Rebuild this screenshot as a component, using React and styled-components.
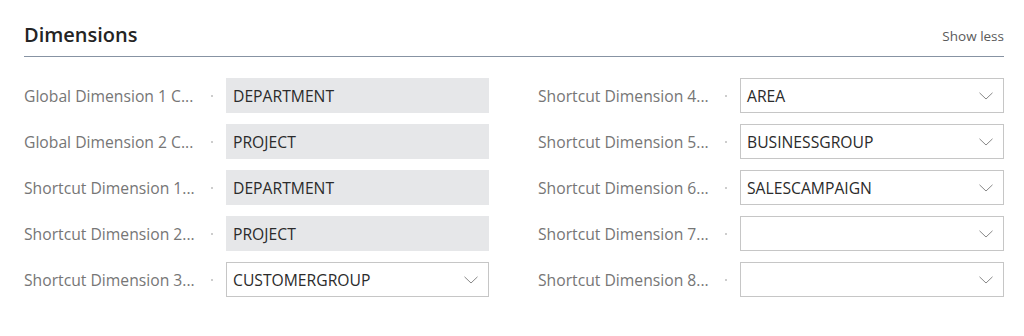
import styled, { createGlobalStyle } from "styled-components";

const GlobalStyle = createGlobalStyle`
  html, body {
    margin: 0;
    padding: 0;
    background: #ffffff;
  }
  body {
    font-family: "Open Sans", "Noto Sans", sans-serif;
  }
`;

const leftFields = [
  { label: "Global Dimension 1 C...", value: "DEPARTMENT", readOnly: true },
  { label: "Global Dimension 2 C...", value: "PROJECT", readOnly: true },
  { label: "Shortcut Dimension 1...", value: "DEPARTMENT", readOnly: true },
  { label: "Shortcut Dimension 2...", value: "PROJECT", readOnly: true },
  { label: "Shortcut Dimension 3...", value: "CUSTOMERGROUP" },
];

const rightFields = [
  { label: "Shortcut Dimension 4...", value: "AREA" },
  { label: "Shortcut Dimension 5...", value: "BUSINESSGROUP" },
  { label: "Shortcut Dimension 6...", value: "SALESCAMPAIGN" },
  { label: "Shortcut Dimension 7...", value: "" },
  { label: "Shortcut Dimension 8...", value: "" },
];

/*----------Chevron of the lookup fields--------*/
const Chevron = () => (
  <svg width="14" height="8" viewBox="0 0 14 8" fill="none">
    <path d="M0.5 0.8 L7 7 L13.5 0.8" stroke="#7a7a7a" strokeWidth="0.9" />
  </svg>
);

const Field = ({ label, value, readOnly }) => (
  <Row>
    <Label>
      <span>{label}</span>
      <Dot />
    </Label>
    {readOnly ? (
      <ReadOnlyBox>{value}</ReadOnlyBox>
    ) : (
      <SelectBox>
        <span>{value}</span>
        <Chevron />
      </SelectBox>
    )}
  </Row>
);

const App = () => {
  return (
    <>
      <GlobalStyle />
      <Section>
        <Header>
          <Title>Dimensions</Title>
          <ShowLess>Show less</ShowLess>
        </Header>
        <Columns>
          <Column>
            {leftFields.map((f) => (
              <Field key={f.label} {...f} />
            ))}
          </Column>
          <Column>
            {rightFields.map((f) => (
              <Field key={f.label} {...f} />
            ))}
          </Column>
        </Columns>
      </Section>
    </>
  );
};

export default App;

const Section = styled.section`
  width: 980px;
  height: 336px;
  padding: 0 20px 0 24px;
  box-sizing: content-box;
`;

const Header = styled.header`
  display: flex;
  justify-content: space-between;
  align-items: flex-end;
  height: 57px;
  padding-bottom: 8px;
  box-sizing: border-box;
  border-bottom: 1px solid #8793a3;
`;

const Title = styled.h2`
  margin: 0;
  font-size: 20px;
  font-weight: 600;
  color: #242424;
  line-height: 26px;
`;

const ShowLess = styled.span`
  font-size: 13.5px;
  color: #5a5a5a;
  line-height: 18px;
  margin-bottom: 3px;
`;

const Columns = styled.div`
  display: grid;
  grid-template-columns: 465px 1fr;
  column-gap: 49px;
  padding-top: 21px;
`;

const Column = styled.div`
  display: flex;
  flex-direction: column;
  gap: 11px;
`;

const Row = styled.div`
  display: grid;
  grid-template-columns: 202px 1fr;
  height: 35px;
  align-items: center;
`;

const Label = styled.div`
  display: flex;
  align-items: center;
  justify-content: space-between;
  padding-right: 13px;
  font-size: 15.7px;
  color: #767676;
  white-space: nowrap;
  overflow: hidden;
`;

const Dot = styled.i`
  width: 2px;
  height: 2px;
  border-radius: 50%;
  background: #bdbdbd;
  flex-shrink: 0;
`;

const ReadOnlyBox = styled.div`
  display: flex;
  align-items: center;
  height: 35px;
  padding: 0 7px;
  background: #e6e7e9;
  color: #2b2b2b;
  font-size: 15.7px;
`;

const SelectBox = styled.div`
  display: flex;
  align-items: center;
  justify-content: space-between;
  height: 35px;
  padding: 0 10px 0 6px;
  box-sizing: border-box;
  border: 1px solid #c6c6c6;
  background: #ffffff;
  color: #2b2b2b;
  font-size: 15.7px;
`;
